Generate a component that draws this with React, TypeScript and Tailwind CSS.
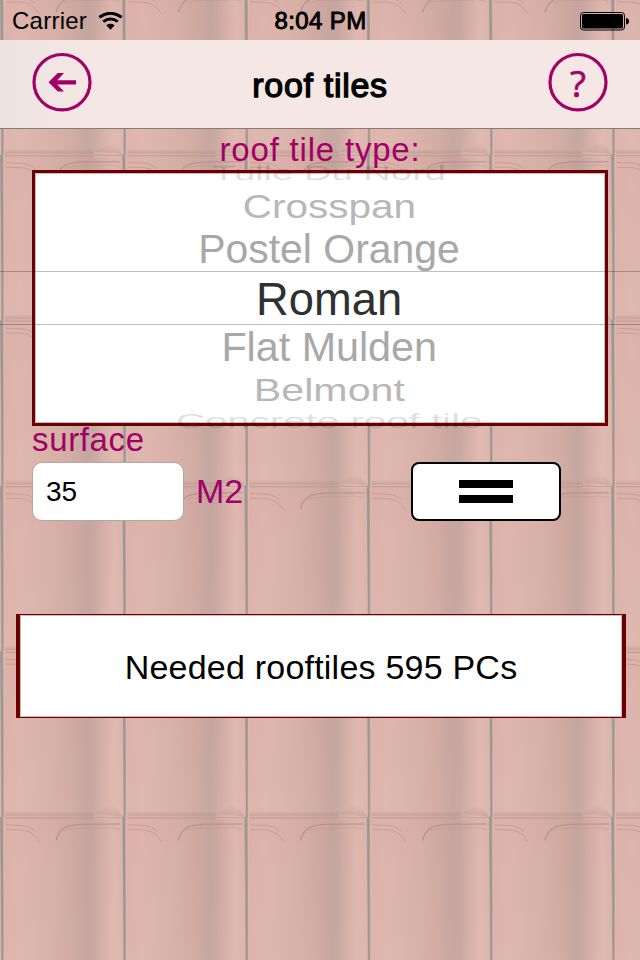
import type { ReactNode } from "react";

const COLUMNS = [-120.3, 2, 124.2, 246.4, 368.6, 490.9, 613.1];
const ROWS = [-10.5, 155, 320.6, 486, 651.7, 817.3];

function RoofBackground() {
  return (
    <svg className="absolute inset-0 h-full w-full" viewBox="0 0 640 960" aria-hidden="true">
      <defs>
        <linearGradient id="clay" x1="0" x2="1" y1="0" y2="0">
          <stop offset="0" stopColor="#dcb3aa" />
          <stop offset="0.15" stopColor="#deb7ae" />
          <stop offset="0.42" stopColor="#d7b1a8" />
          <stop offset="0.57" stopColor="#cfaba3" />
          <stop offset="0.7" stopColor="#c3a59f" />
          <stop offset="0.75" stopColor="#c7a8a2" />
          <stop offset="0.83" stopColor="#d5b1aa" />
          <stop offset="0.91" stopColor="#dfbab2" />
          <stop offset="1" stopColor="#dcb4aa" />
        </linearGradient>
        <linearGradient id="shade" x1="0" x2="0" y1="0" y2="1">
          <stop offset="0" stopColor="#d49d93" stopOpacity="0.16" />
          <stop offset="0.3" stopColor="#d49d93" stopOpacity="0.05" />
          <stop offset="1" stopColor="#e5c5b8" stopOpacity="0.1" />
        </linearGradient>
        <linearGradient id="lip" x1="0" x2="0" y1="0" y2="1">
          <stop offset="0" stopColor="#b99389" stopOpacity="0" />
          <stop offset="0.7" stopColor="#b08c84" stopOpacity="0.4" />
          <stop offset="1" stopColor="#b08c84" stopOpacity="0.1" />
        </linearGradient>
        <linearGradient id="fold" x1="0" x2="0" y1="0" y2="1">
          <stop offset="0" stopColor="#b8958d" stopOpacity="0" />
          <stop offset="1" stopColor="#b8958d" stopOpacity="0.45" />
        </linearGradient>
        <g id="tile">
          <rect width="122.4" height="165.8" fill="url(#clay)" />
          <rect width="122.4" height="165.8" fill="url(#shade)" />
          <path d="M3 159H92V165H3Z" fill="url(#lip)" />
          <path d="M92 162C102 159 104 153 109 153C113 154 117 160 121 165Z" fill="url(#fold)" />
          <path d="M3 0.6H122" stroke="#bd958f" strokeOpacity="0.7" strokeWidth="1.3" />
          <path d="M92 1.6H121" stroke="#e2c0b6" strokeOpacity="0.7" strokeWidth="1" />
          <path d="M4 7.5C17 9 25 6 33 14M4 12.3C18 13 28 10 37 24" fill="none" stroke="#b68f89" strokeOpacity="0.65" strokeWidth="0.9" />
          <path d="M54 23C58 9 66 8 80 7L118 6.7" fill="none" stroke="#a98782" strokeOpacity="0.75" strokeWidth="1.1" />
          <path d="M62 13C80 9 96 12 108 10L118 12" fill="none" stroke="#b6918c" strokeOpacity="0.4" strokeWidth="1" />
          <path d="M2.2 0V165.5" stroke="#e3b9a8" strokeOpacity="0.7" strokeWidth="1.2" />
          <path d="M-1.6 0H0.8L1.2 85V165.5H-0.3L-0.8 85Z" fill="#9a9897" stroke="#9a9897" strokeWidth="0.5" />
        </g>
      </defs>
      {ROWS.map((y) =>
        COLUMNS.map((x) => <use key={`${x}-${y}`} href="#tile" x={x} y={y} />),
      )}
    </svg>
  );
}

function CircleButton({ label, children }: { label: string; children: ReactNode }) {
  return (
    <button aria-label={label} className="h-[60px] w-[60px]">
      <svg viewBox="0 0 60 60" className="block h-full w-full" fill="none">
        <ellipse cx="30" cy="30.2" rx="28" ry="27.7" stroke="#a20067" strokeWidth="3.2" />
        {children}
      </svg>
    </button>
  );
}

const wheel = [
  { name: "Tulle Du Nord", box: "h-[28px]", look: "text-black/15 scale-x-[0.83] scale-y-[0.45] -translate-y-[2px]" },
  { name: "Crosspan", box: "h-[38px]", look: "text-[#b7b7b7] scale-x-[0.88] scale-y-[0.73] -translate-y-[2px]" },
  { name: "Postel Orange", box: "h-[48px]", look: "text-[#a8a8a8] scale-x-[0.89] scale-y-[0.87] -translate-y-[2px]" },
  { name: "Roman", box: "h-[52px]", look: "text-[#303030] scale-x-[0.985] scale-y-[1.02] -translate-y-[2px]" },
  { name: "Flat Mulden", box: "h-[46px]", look: "text-[#a8a8a8] scale-x-[0.897] scale-y-[0.87] -translate-y-[3px]" },
  { name: "Belmont", box: "h-[38px]", look: "text-[#b7b7b7] scale-x-[0.895] scale-y-[0.7] -translate-y-[2px]" },
  { name: "Concrete roof tile", box: "h-[28px]", look: "text-black/15 scale-x-[0.875] scale-y-[0.45] -translate-y-[4px]" },
];

export default function App() {
  return (
    <main className="relative h-[960px] w-[640px] overflow-hidden bg-[#d8b0a7] font-['Liberation_Sans',Arial,sans-serif] text-black">
      <RoofBackground />
      <div className="relative flex h-full flex-col">
        <header className="grid h-10 shrink-0 grid-cols-3 items-center pl-3 pr-[11px] pt-0.5">
          <div className="flex items-center gap-[10px] text-[24px] leading-[38px] tracking-[0.25px]">
            <span className="w-[76px] whitespace-nowrap">Carrier</span>
            <svg className="h-[19px] w-[25px]" viewBox="0 0 25 19" fill="none" stroke="#000">
              <path d="M1.3 5.2Q12.5-2.8 23.7 5.2" strokeWidth="2.9" />
              <path d="M5.2 9.7Q12.5 4.2 19.8 9.7" strokeWidth="2.9" />
              <path d="M8.3 13.2Q12.5 10.3 16.7 13.2L12.5 17.8Z" fill="#000" stroke="none" />
            </svg>
          </div>
          <span className="whitespace-nowrap text-center text-[24px] leading-[38px] tracking-[0.4px] [-webkit-text-stroke:0.9px_#000]">8:04 PM</span>
          <svg className="h-[20px] w-[50px] justify-self-end" viewBox="0 0 50 20">
            <rect x="1.5" y="1.5" width="44" height="17.5" rx="3" fill="none" stroke="#000" />
            <rect x="3" y="3" width="41" height="14.5" rx="1.5" />
            <path d="M47 7Q50 7.5 50 10.2Q50 13 47 13.5Z" />
          </svg>
        </header>

        <nav className="flex h-[89px] shrink-0 items-start justify-between border-b border-[#8f7975] bg-[linear-gradient(90deg,#ede4e2,#f4e7e4_14%)] px-8 pt-3">
          <CircleButton label="Back">
            <path d="M16.5 30.3L25.8 21H32L25.3 28.2H44V32.5H25.3L32 39.6H25.8Z" fill="#a20067" />
          </CircleButton>
          <h1 className="whitespace-nowrap pt-3 text-[34px] leading-[42px] tracking-[0.7px] [-webkit-text-stroke:1.3px_#000]">roof tiles</h1>
          <CircleButton label="Help">
            <text x="30" y="45" textAnchor="middle" fontSize="37" fontFamily="Open Sans" fill="#a20067" stroke="#a20067" strokeWidth="0.7">?</text>
          </CircleButton>
        </nav>

        <h2 className="h-[41px] shrink-0 text-center text-[33px] leading-[42px] tracking-[0.8px] text-[#a20067]">roof tile type:</h2>

        <section className="relative mx-8 h-[256px] shrink-0 border-[3px] border-[#6b0000] bg-white shadow-[inset_0_0_0_1px_#d5b8b8]">
          <ul className="-mt-[12px] flex flex-col items-center pl-[18px]">
            {wheel.map((item) => (
              <li key={item.name} className={`flex shrink-0 items-center justify-center ${item.box}`}>
                <span className={`whitespace-nowrap text-[46px] leading-[52px] ${item.look}`}>{item.name}</span>
              </li>
            ))}
          </ul>
          <div className="absolute -left-[35px] top-[98px] h-[54px] w-[640px] border-y border-black/25" />
        </section>

        <div className="h-9 shrink-0 pl-8 text-[33px] leading-[28px] tracking-[0.65px] text-[#a20067]">surface</div>
        <div className="flex h-[59px] shrink-0 items-center pl-8">
          <div className="flex h-[59px] w-[152px] items-center rounded-[10px] border border-[#b8a5a2] bg-white pl-[13px] text-[28px]">35</div>
          <span className="w-[227px] pl-[12px] text-[34px] text-[#a20067]">M2</span>
          <button aria-label="Calculate" className="flex h-[59px] w-[150px] flex-col items-center justify-center gap-[7px] rounded-[8px] border-2 border-black bg-white">
            <span className="h-2 w-[54px] bg-black" />
            <span className="h-2 w-[54px] bg-black" />
          </button>
        </div>
        <div className="ml-4 mt-[93px] flex h-[104px] w-[610px] shrink-0 items-center justify-center border-x-4 border-y border-[#6b0000] bg-white pt-[3px] text-[34px] tracking-[0.22px] shadow-[inset_0_0_0_1px_#d5b8b8]">
          Needed rooftiles 595 PCs
        </div>
      </div>
    </main>
  );
}
